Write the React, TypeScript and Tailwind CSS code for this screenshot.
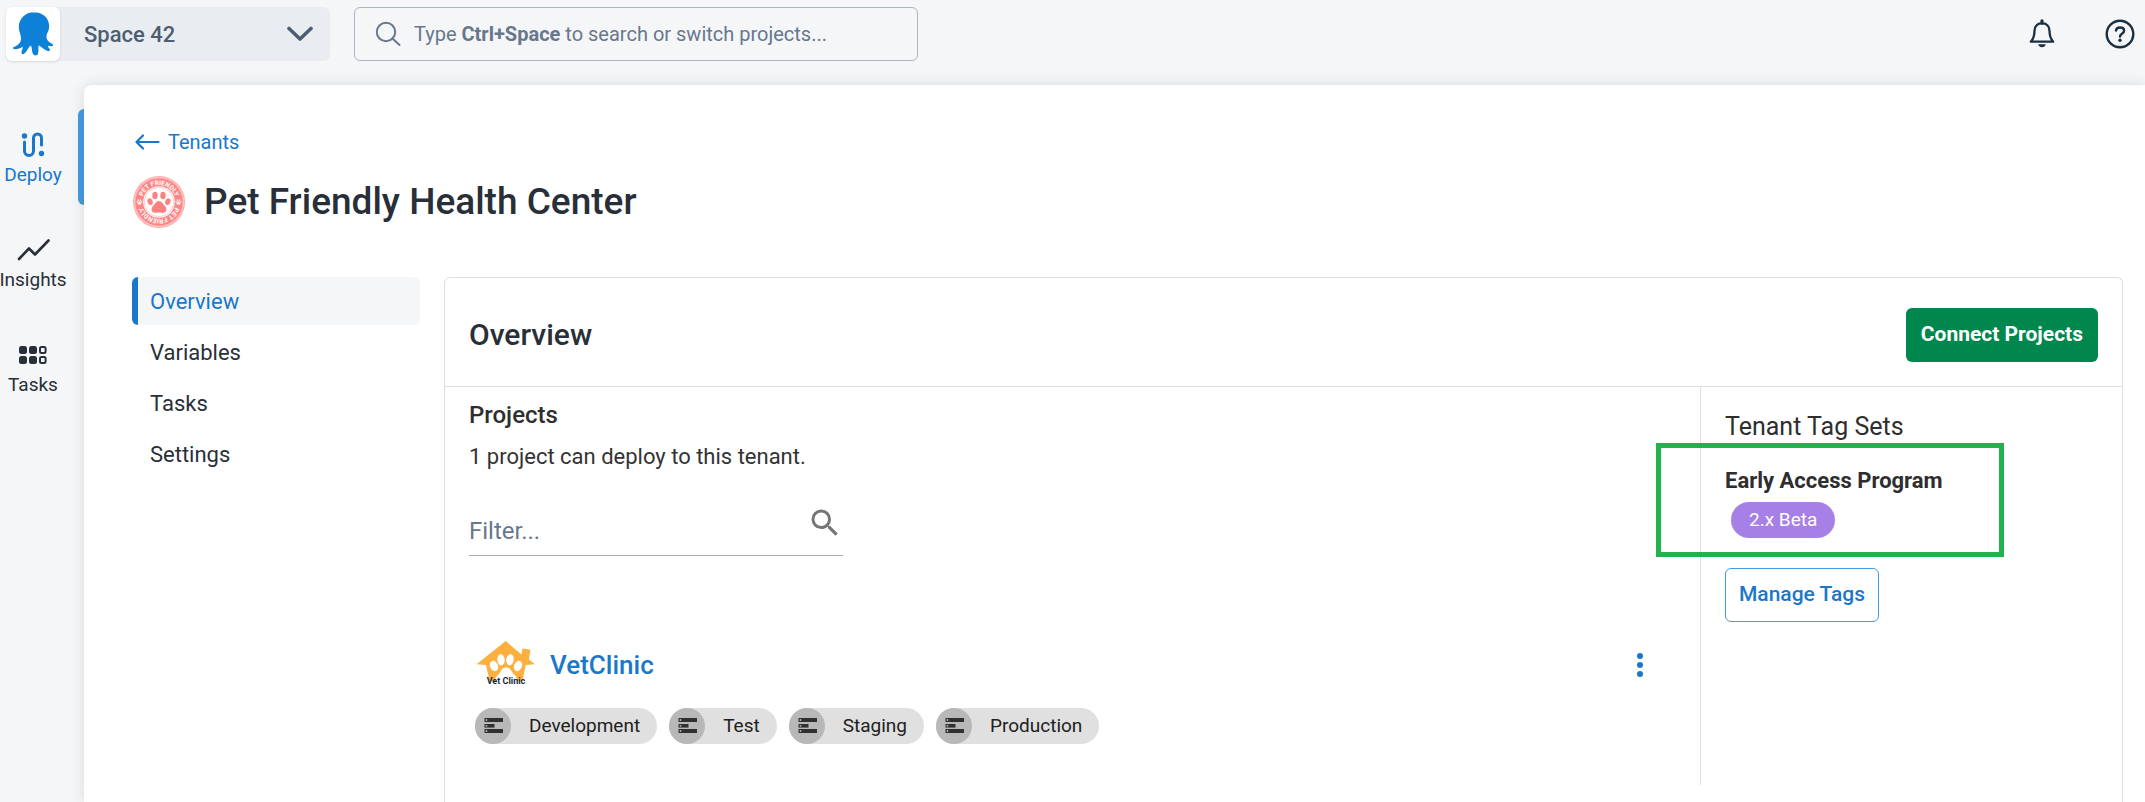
import type { ReactNode } from "react";
import { MdSearch } from "react-icons/md";

const mainNav = [
  { label: "Deploy", icon: <DeployIcon />, active: true },
  { label: "Insights", icon: <InsightsIcon />, active: false },
  { label: "Tasks", icon: <TasksIcon />, active: false },
];

const tenantNav = ["Overview", "Variables", "Tasks", "Settings"];

const environments = ["Development", "Test", "Staging", "Production"];

function OctopusLogo() {
  return (
    <svg viewBox="0 0 54 54" className="size-[54px]" fill="#0d80d8" aria-hidden="true">
      <path d="M28 5.2c-8.600 0-15.200 6.300-15.200 14.800 0 4.500 2.200 7.800 2.300 11.500.1 4.300-3.600 7-7.300 8.500-1.300.6-.9 2.200.7 2.200 3.200.1 5.900-1 8.200-2.500.4 2-1.200 3.700-1.200 6 0 1.700 1.600 1.900 3.200.5 2.700-2.300 3.600-6.200 6.100-7.600 1.600 1.900.4 6.200 2.600 8.800 1.200 1.500 3.600 1.600 4.500-.3 1.200-2.700-.1-6.300.8-8.500 2.400.7 4.200 3.700 8.300 5.100 1.900.6 3.500.3 2.800-1.300-.8-1.700-2-2.500-1.900-3.700 1.500.3 2.800.7 4.300.5 1.300-.2 1.200-1.500.1-2.200-3.300-2-5.900-3.700-5.800-7.600.1-3.400 2.700-5.300 2.700-10.400 0-8.100-6.800-13.800-15.200-13.800z" />
    </svg>
  );
}

function DeployIcon() {
  return (
    <svg viewBox="0 0 24 28" className="h-7 w-6" fill="none" stroke="currentColor" strokeWidth="3" strokeLinecap="round" aria-hidden="true">
      <path d="M3.500 11v9a4.500 4.500 0 0 0 9 0V7a4 4 0 0 1 8 0v7" />
      <circle cx="3.500" cy="5" r="2.700" fill="currentColor" stroke="none" />
      <circle cx="20.500" cy="22.500" r="2.700" fill="currentColor" stroke="none" />
    </svg>
  );
}

function InsightsIcon() {
  return (
    <svg viewBox="0 0 36 28" className="h-7 w-9" fill="none" stroke="currentColor" strokeWidth="2.600" strokeLinecap="round" strokeLinejoin="round" aria-hidden="true">
      <path d="M4 23 14 12.500l6 6L33.500 4.500" />
    </svg>
  );
}

function TasksIcon() {
  return (
    <svg viewBox="0 0 28 28" className="size-7" fill="currentColor" aria-hidden="true">
      {[5, 15].map((y) => (
        <g key={y}>
          <rect x="0" y={y} width="8" height="8" rx="2.500" />
          <rect x="10" y={y} width="8" height="8" rx="2.500" />
          <rect x="21" y={y + 1} width="5.600" height="6" rx="1.500" fill="none" stroke="currentColor" strokeWidth="2" />
        </g>
      ))}
    </svg>
  );
}

function Paw({ transform }: { transform?: string }) {
  return (
    <g transform={transform}>
      <ellipse cx="-8.900" cy="-.8" rx="2.600" ry="3.400" transform="rotate(-20 -8.900 -.8)" />
      <ellipse cx="-4" cy="-7" rx="2.700" ry="3.800" />
      <ellipse cx="4" cy="-7" rx="2.700" ry="3.800" />
      <ellipse cx="8.900" cy="-.8" rx="2.600" ry="3.400" transform="rotate(20 8.900 -.8)" />
      <path d="M0-1.500c-2.800 0-3.900 3-5.700 4.800C-7.300 4.900-8 7-7 8.800c1.500 2.500 4.400 1.200 7 1.200s5.500 1.300 7-1.200c1-1.800.3-3.900-1.300-5.500C3.900 1.500 2.800-1.500 0-1.500z" />
    </g>
  );
}

function TenantLogo() {
  return (
    <svg viewBox="-27 -27 54 54" className="size-[54px]" aria-hidden="true">
      <circle r="26" fill="#ffa9a9" />
      <circle r="24.600" fill="none" stroke="#ffd0d0" strokeWidth=".8" />
      <circle r="23.500" fill="#ff8585" />
      <circle r="15.800" fill="#fff" />
      <circle r="14.700" fill="none" stroke="#ffb5b5" strokeWidth=".7" />
      <g fill="#ff8080">
        <Paw transform="translate(0 .5)" />
      </g>
      <g fill="#fff">
        <Paw transform="translate(-19.500 0) scale(.26)" />
        <Paw transform="translate(19.500 0) scale(.26)" />
      </g>
      <path id="ring-top" d="M-17 0A17 17 0 0 1 17 0" fill="none" />
      <path id="ring-bottom" d="M17 0A17 17 0 0 1-17 0" fill="none" />
      <g fill="#fff" fontFamily="Roboto, sans-serif" fontWeight="700" fontSize="6.500" textAnchor="middle">
        <text>
          <textPath href="#ring-top" startOffset="50%">PET FRIENDLY</textPath>
        </text>
        <text>
          <textPath href="#ring-bottom" startOffset="50%">PET FRIENDLY</textPath>
        </text>
      </g>
    </svg>
  );
}

function VetClinicLogo() {
  return (
    <svg viewBox="0 0 60 60" className="size-15" aria-hidden="true">
      <path d="M30.700 6 46.500 19.500l1-6 8 1.200-1.600 9.800L60 29.300 50.700 30l-3.200 16H14.500L11 30l-9.500-.7z" fill="#fdb040" />
      <g fill="#fff">
        <ellipse cx="19" cy="31" rx="3.900" ry="5.400" transform="rotate(-22 19 31)" />
        <ellipse cx="26" cy="24.800" rx="3.700" ry="5.600" transform="rotate(-5 26 24.800)" />
        <ellipse cx="35" cy="24.800" rx="3.700" ry="5.600" transform="rotate(8 35 24.800)" />
        <ellipse cx="43" cy="31" rx="3.900" ry="5.400" transform="rotate(24 43 31)" />
        <path d="M31 32.500c-5 0-5 5.200-8 7.500-2 1.600-3 3.300-2.500 6H42c.4-2.700-.7-4.400-2.500-6-3-2.300-3.500-7.500-8.500-7.500z" />
      </g>
      <text x="31" y="49" fill="#152a3c" fontFamily="Roboto, sans-serif" fontWeight="700" fontSize="9" textAnchor="middle">
        Vet Clinic
      </text>
    </svg>
  );
}

function EnvironmentChip({ name }: { name: string }) {
  return (
    <li className="flex h-9 items-center rounded-full bg-[#e0e0e0] pr-[17px] text-[19px] text-[#212121]">
      <svg viewBox="0 0 36 36" className="mr-[18px] size-9" aria-hidden="true">
        <circle cx="18" cy="18" r="18" fill="#b8b8b8" />
        <g fill="#303030">
          <rect x="9.500" y="10" width="18.500" height="4" />
          <rect x="9.500" y="16" width="10" height="3.600" />
          <rect x="9.500" y="21" width="18.500" height="4" />
        </g>
        <g fill="#b8b8b8">
          <circle cx="11.500" cy="12" r=".9" />
          <circle cx="11.500" cy="17.800" r=".9" />
          <circle cx="11.500" cy="23" r=".9" />
        </g>
      </svg>
      {name}
    </li>
  );
}

function MainNavItem({ label, icon, active }: { label: string; icon: ReactNode; active: boolean }) {
  return (
    <a
      href={`#${label.toLowerCase()}`}
      className={`flex h-24 items-center justify-between ${active ? "text-[#1a77ca]" : "text-[#282f38]"}`}
    >
      <span className="flex w-[66px] flex-col items-center gap-1 pt-1 text-[19px] leading-6">
        {icon}
        {label}
      </span>
      {active && <span className="h-full w-1.5 rounded-l-md bg-[#449be1]" />}
    </a>
  );
}

function TopBar() {
  return (
    <header className="flex h-[85px] items-start pt-[7px] pr-[10px] pl-1.5">
      <button type="button" className="flex h-[54px] w-[324px] items-center rounded-md bg-[#e9edf2] pr-[17px] text-[22px] font-medium text-[#4f5d70]">
        <span className="rounded-md bg-white shadow-sm">
          <OctopusLogo />
        </span>
        <span className="ml-6 flex-1 text-left">Space 42</span>
        <svg viewBox="0 0 26 16" className="h-4 w-[26px]" fill="none" stroke="currentColor" strokeWidth="3.600" strokeLinecap="round" strokeLinejoin="round" aria-hidden="true">
          <path d="M2 2.500 13 13 24 2.500" />
        </svg>
      </button>
      <div className="relative ml-6 h-[54px] w-[564px] text-[20px] text-[#68778d]">
        <input
          id="project-search"
          type="text"
          className="size-full rounded-md border border-[#acb5c6] bg-transparent pr-4 pl-[60px]"
        />
        <label htmlFor="project-search" className="pointer-events-none absolute inset-0 flex items-center pl-[21px]">
          <svg viewBox="0 0 26 26" className="mr-[13px] size-[26px]" fill="none" stroke="currentColor" strokeWidth="2" strokeLinecap="round" aria-hidden="true">
            <circle cx="11" cy="11" r="9.200" />
            <path d="M17.500 17.500 24.500 24" />
          </svg>
          <span>
            Type <b className="font-bold">Ctrl+Space</b> to search or switch projects...
          </span>
        </label>
      </div>
      <div className="ml-auto flex h-[54px] items-center gap-12 text-[#1b2f40]">
        <button type="button" aria-label="Notifications">
          <svg viewBox="0 0 30 30" className="size-[30px]" fill="none" stroke="currentColor" strokeWidth="2.300" strokeLinejoin="round" aria-hidden="true">
            <path d="M15 4.200c-4.300 0-7.500 3-7.500 7.500 0 5.500-1 8-3.700 11h22.400c-2.700-3-3.700-5.500-3.700-11 0-4.500-3.200-7.500-7.500-7.500z" />
            <path d="M15 1.800v2.400" strokeWidth="3.200" strokeLinecap="round" />
            <path d="M11.200 25.300h7.600c-.5 2-2 3-3.800 3s-3.300-1-3.800-3z" fill="currentColor" stroke="none" />
          </svg>
        </button>
        <button type="button" aria-label="Help">
          <svg viewBox="0 0 30 30" className="size-[30px]" fill="none" stroke="currentColor" strokeWidth="2.400" strokeLinecap="round" strokeLinejoin="round" aria-hidden="true">
            <circle cx="15" cy="15" r="13.300" />
            <path d="M11 11.500c.3-2 1.900-3 4-3 2.300 0 4.100 1.200 4.100 3.200 0 3-4.100 3-4.100 5.800" />
            <circle cx="15" cy="21.300" r="1.700" fill="currentColor" stroke="none" />
          </svg>
        </button>
      </div>
    </header>
  );
}

function TagSets() {
  return (
    <aside className="w-[422px] shrink-0 border-l border-[#dcdfe3] px-6 pt-[25px]">
      <h3 className="text-[25px] leading-[30px] text-[#2e2e2e]">Tenant Tag Sets</h3>
      <div className="relative mt-6">
        <h4 className="text-[22px] leading-[30px] font-bold text-[#2e2e2e]">Early Access Program</h4>
        <span className="mt-1.5 ml-1.5 inline-flex h-9 items-center rounded-full bg-[#a680e6] px-[18px] text-[19px] text-white">
          2.x Beta
        </span>
        {/* Highlight frame */}
        <div className="pointer-events-none absolute -top-[23px] -left-[69px] h-[114px] w-[348px] border-5 border-[#22b14c]" />
      </div>
      <button type="button" className="mt-[30px] h-[54px] rounded-md border border-[#449be1] px-[13px] text-[21px] font-medium text-[#1a77ca]">
        Manage Tags
      </button>
    </aside>
  );
}

function OverviewPanel() {
  return (
    <section className="min-w-0 flex-1 rounded-t-md border border-b-0 border-[#dcdfe3]">
      <div className="flex items-center justify-between border-b border-[#dce0e5] px-6 pt-[30px] pb-6">
        <h2 className="text-[30px] leading-9 font-medium text-[#282f38]">Overview</h2>
        <button type="button" className="h-[54px] rounded-md bg-[#00874d] px-[15px] text-[21px] font-bold text-white">
          Connect Projects
        </button>
      </div>
      <div className="flex">
        <div className="min-w-0 flex-1 pt-[13px] pb-[41px] pl-6">
          <h3 className="text-[24px] leading-[30px] font-medium text-[#2e2e2e]">Projects</h3>
          <p className="mt-3 text-[22px] leading-[30px] text-[#333333]">1 project can deploy to this tenant.</p>
          <div className="mt-[33px] flex w-[374px] items-start border-b border-[#adadb8]">
            <input
              type="text"
              aria-label="Filter projects"
              placeholder="Filter..."
              className="h-[50px] min-w-0 flex-1 pt-0.5 text-[24px] placeholder:text-[#68778d]"
            />
            <MdSearch className="size-9 text-[#757575]" aria-hidden="true" />
          </div>

          <article className="mt-[79px] pr-[42px] pl-1.5">
            <div className="flex items-center">
              <VetClinicLogo />
              <a href="#vetclinic" className="ml-[15px] text-[26px] font-medium text-[#1a77ca]">
                VetClinic
              </a>
              <button type="button" aria-label="Project menu" className="ml-auto flex size-9 items-center justify-center">
                <svg viewBox="0 0 6 24" className="h-6 w-1.5" fill="#1a77ca" aria-hidden="true">
                  <circle cx="3" cy="3" r="3" />
                  <circle cx="3" cy="12" r="3" />
                  <circle cx="3" cy="21" r="3" />
                </svg>
              </button>
            </div>
            <ul className="mt-[13px] flex flex-wrap gap-3">
              {environments.map((name) => (
                <EnvironmentChip key={name} name={name} />
              ))}
            </ul>
          </article>
        </div>
        <TagSets />
      </div>
    </section>
  );
}

export default function App() {
  return (
    <div className="flex min-h-screen flex-col bg-[#f4f6f8] font-[Roboto,sans-serif]">
      <TopBar />
      <div className="flex flex-1">
        <nav aria-label="Main" className="flex w-[84px] shrink-0 flex-col gap-[9px] pt-6">
          {mainNav.map((item) => (
            <MainNavItem key={item.label} {...item} />
          ))}
        </nav>

        <main className="flex min-w-0 flex-1 flex-col rounded-tl-lg bg-white pt-[42px] pr-[22px] pl-12 shadow-[0_0_14px_rgba(0,0,0,0.12)]">
          <a href="#tenants" className="flex items-center gap-2 self-start pl-[3px] text-[20px] leading-[30px] text-[#1a77ca]">
            <svg viewBox="0 0 25 16" className="h-4 w-[25px]" fill="none" stroke="currentColor" strokeWidth="2.200" strokeLinecap="round" strokeLinejoin="round" aria-hidden="true">
              <path d="M23.500 8H1.500M8 1.500 1.500 8 8 14.500" />
            </svg>
            Tenants
          </a>
          <div className="mt-[18px] flex items-center gap-[18px]">
            <TenantLogo />
            <h1 className="text-[37px] leading-[48px] font-medium text-[#282f38]">Pet Friendly Health Center</h1>
          </div>

          <div className="mt-12 flex flex-1 gap-6">
            <nav aria-label="Tenant" className="flex w-72 shrink-0 flex-col gap-[3px] text-[22px]">
              {tenantNav.map((label) => (
                <a
                  key={label}
                  href={`#tenant-${label.toLowerCase()}`}
                  className={`flex h-12 items-center rounded-md border-l-6 pl-3 ${
                    label === "Overview"
                      ? "border-[#1a77ca] bg-[#f4f6f8] text-[#1a77ca]"
                      : "border-transparent text-[#282f38]"
                  }`}
                >
                  {label}
                </a>
              ))}
            </nav>
            <OverviewPanel />
          </div>
        </main>
      </div>
    </div>
  );
}
